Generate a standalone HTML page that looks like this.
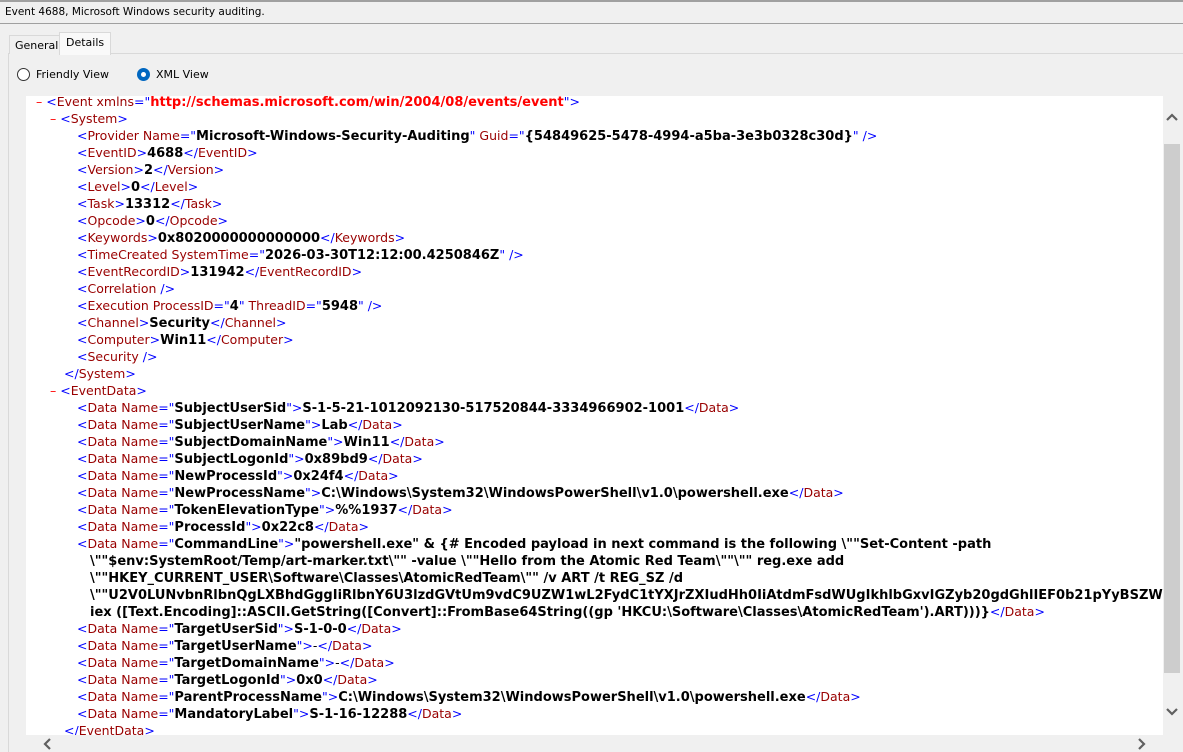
<!DOCTYPE html>
<html><head><meta charset="utf-8"><style>
body{margin:0;width:1183px;height:751px;background:#f0f0f0;position:relative;overflow:hidden;font-family:"Liberation Sans",sans-serif;}
.top{position:absolute;left:0;top:0;width:1183px;height:24px;background:#f0f0f0;border-top:2px solid #a0a0a0;border-bottom:1px solid #a0a0a0;box-sizing:border-box;line-height:20px;padding-left:5px;font-family:"DejaVu Sans",sans-serif;font-size:10.5px;}
.tab{position:absolute;font-family:"DejaVu Sans",sans-serif;font-size:11px;}
.panel{position:absolute;left:8px;top:53px;width:1175px;height:698px;border-left:1px solid #d9d9d9;border-top:1px solid #d9d9d9;background:#f0f0f0;}
.xml{position:absolute;left:26px;top:96px;width:1137px;height:639px;background:#fff;overflow:hidden;font-family:"DejaVu Sans",Verdana,sans-serif;font-size:12.5px;}
.l{position:absolute;white-space:pre;line-height:17px;height:17px;margin-top:-2px}
.b{color:#0000ff}.n{color:#990000}.v{color:#000;font-weight:bold;font-size:13px;line-height:1}.r{color:#ff0000;font-weight:bold;font-size:13px;line-height:1}.m{color:#ff0000}
.vs{position:absolute;left:1163px;top:96px;width:20px;height:639px;background:#f0f0f0}
.thumb{position:absolute;left:1164px;top:144px;width:16px;height:529px;background:#cdcdcd}
.hs{position:absolute;left:26px;top:735px;width:1137px;height:16px;background:#f0f0f0}
</style></head><body>
<div class="top">Event 4688, Microsoft Windows security auditing.</div>
<div class="panel"></div>
<div style="position:absolute;left:9px;top:35px;width:50px;height:18px;border:1px solid #d9d9d9;border-bottom:none;background:#f0f0f0"></div>
<div class="tab" style="left:15px;top:39px">General</div>
<div style="position:absolute;left:59px;top:32px;width:50px;height:22px;border:1px solid #d9d9d9;border-bottom:none;background:#f9f9f9"></div>
<div class="tab" style="left:66px;top:36px">Details</div>
<div style="position:absolute;left:17px;top:68px;width:11px;height:11px;border:1px solid #333;border-radius:50%;background:#fff"></div>
<div class="tab" style="left:36px;top:68px">Friendly View</div>
<div style="position:absolute;left:137px;top:68px;width:13px;height:13px;border-radius:50%;background:#0067c0"></div>
<div style="position:absolute;left:141px;top:72px;width:5px;height:5px;border-radius:50%;background:#fff"></div>
<div class="tab" style="left:156px;top:68px">XML View</div>
<div class="xml">
<div class="l" style="left:10px;top:-1px"><span class="m">–</span> <span class="b">&lt;</span><span class="n">Event xmlns</span><span class="b">="</span><span class="r">http://schemas.microsoft.com/win/2004/08/events/event</span><span class="b">"&gt;</span></div>
<div class="l" style="left:24px;top:16px"><span class="m">–</span> <span class="b">&lt;</span><span class="n">System</span><span class="b">&gt;</span></div>
<div class="l" style="left:51px;top:33px"><span class="b">&lt;</span><span class="n">Provider Name</span><span class="b">="</span><span class="v">Microsoft-Windows-Security-Auditing</span><span class="b">"</span> <span class="n">Guid</span><span class="b">="</span><span class="v">{54849625-5478-4994-a5ba-3e3b0328c30d}</span><span class="b">" /&gt;</span></div>
<div class="l" style="left:51px;top:50px"><span class="b">&lt;</span><span class="n">EventID</span><span class="b">&gt;</span><span class="v">4688</span><span class="b">&lt;/</span><span class="n">EventID</span><span class="b">&gt;</span></div>
<div class="l" style="left:51px;top:67px"><span class="b">&lt;</span><span class="n">Version</span><span class="b">&gt;</span><span class="v">2</span><span class="b">&lt;/</span><span class="n">Version</span><span class="b">&gt;</span></div>
<div class="l" style="left:51px;top:84px"><span class="b">&lt;</span><span class="n">Level</span><span class="b">&gt;</span><span class="v">0</span><span class="b">&lt;/</span><span class="n">Level</span><span class="b">&gt;</span></div>
<div class="l" style="left:51px;top:101px"><span class="b">&lt;</span><span class="n">Task</span><span class="b">&gt;</span><span class="v">13312</span><span class="b">&lt;/</span><span class="n">Task</span><span class="b">&gt;</span></div>
<div class="l" style="left:51px;top:118px"><span class="b">&lt;</span><span class="n">Opcode</span><span class="b">&gt;</span><span class="v">0</span><span class="b">&lt;/</span><span class="n">Opcode</span><span class="b">&gt;</span></div>
<div class="l" style="left:51px;top:135px"><span class="b">&lt;</span><span class="n">Keywords</span><span class="b">&gt;</span><span class="v">0x8020000000000000</span><span class="b">&lt;/</span><span class="n">Keywords</span><span class="b">&gt;</span></div>
<div class="l" style="left:51px;top:152px"><span class="b">&lt;</span><span class="n">TimeCreated SystemTime</span><span class="b">="</span><span class="v">2026-03-30T12:12:00.4250846Z</span><span class="b">" /&gt;</span></div>
<div class="l" style="left:51px;top:169px"><span class="b">&lt;</span><span class="n">EventRecordID</span><span class="b">&gt;</span><span class="v">131942</span><span class="b">&lt;/</span><span class="n">EventRecordID</span><span class="b">&gt;</span></div>
<div class="l" style="left:51px;top:186px"><span class="b">&lt;</span><span class="n">Correlation</span><span class="b"> /&gt;</span></div>
<div class="l" style="left:51px;top:203px"><span class="b">&lt;</span><span class="n">Execution ProcessID</span><span class="b">="</span><span class="v">4</span><span class="b">"</span> <span class="n">ThreadID</span><span class="b">="</span><span class="v">5948</span><span class="b">" /&gt;</span></div>
<div class="l" style="left:51px;top:220px"><span class="b">&lt;</span><span class="n">Channel</span><span class="b">&gt;</span><span class="v">Security</span><span class="b">&lt;/</span><span class="n">Channel</span><span class="b">&gt;</span></div>
<div class="l" style="left:51px;top:237px"><span class="b">&lt;</span><span class="n">Computer</span><span class="b">&gt;</span><span class="v">Win11</span><span class="b">&lt;/</span><span class="n">Computer</span><span class="b">&gt;</span></div>
<div class="l" style="left:51px;top:254px"><span class="b">&lt;</span><span class="n">Security</span><span class="b"> /&gt;</span></div>
<div class="l" style="left:38px;top:271px"><span class="b">&lt;/</span><span class="n">System</span><span class="b">&gt;</span></div>
<div class="l" style="left:24px;top:288px"><span class="m">–</span> <span class="b">&lt;</span><span class="n">EventData</span><span class="b">&gt;</span></div>
<div class="l" style="left:51px;top:305px"><span class="b">&lt;</span><span class="n">Data Name</span><span class="b">="</span><span class="v">SubjectUserSid</span><span class="b">"&gt;</span><span class="v">S-1-5-21-1012092130-517520844-3334966902-1001</span><span class="b">&lt;/</span><span class="n">Data</span><span class="b">&gt;</span></div>
<div class="l" style="left:51px;top:322px"><span class="b">&lt;</span><span class="n">Data Name</span><span class="b">="</span><span class="v">SubjectUserName</span><span class="b">"&gt;</span><span class="v">Lab</span><span class="b">&lt;/</span><span class="n">Data</span><span class="b">&gt;</span></div>
<div class="l" style="left:51px;top:339px"><span class="b">&lt;</span><span class="n">Data Name</span><span class="b">="</span><span class="v">SubjectDomainName</span><span class="b">"&gt;</span><span class="v">Win11</span><span class="b">&lt;/</span><span class="n">Data</span><span class="b">&gt;</span></div>
<div class="l" style="left:51px;top:356px"><span class="b">&lt;</span><span class="n">Data Name</span><span class="b">="</span><span class="v">SubjectLogonId</span><span class="b">"&gt;</span><span class="v">0x89bd9</span><span class="b">&lt;/</span><span class="n">Data</span><span class="b">&gt;</span></div>
<div class="l" style="left:51px;top:373px"><span class="b">&lt;</span><span class="n">Data Name</span><span class="b">="</span><span class="v">NewProcessId</span><span class="b">"&gt;</span><span class="v">0x24f4</span><span class="b">&lt;/</span><span class="n">Data</span><span class="b">&gt;</span></div>
<div class="l" style="left:51px;top:390px"><span class="b">&lt;</span><span class="n">Data Name</span><span class="b">="</span><span class="v">NewProcessName</span><span class="b">"&gt;</span><span class="v">C:\Windows\System32\WindowsPowerShell\v1.0\powershell.exe</span><span class="b">&lt;/</span><span class="n">Data</span><span class="b">&gt;</span></div>
<div class="l" style="left:51px;top:407px"><span class="b">&lt;</span><span class="n">Data Name</span><span class="b">="</span><span class="v">TokenElevationType</span><span class="b">"&gt;</span><span class="v">%%1937</span><span class="b">&lt;/</span><span class="n">Data</span><span class="b">&gt;</span></div>
<div class="l" style="left:51px;top:424px"><span class="b">&lt;</span><span class="n">Data Name</span><span class="b">="</span><span class="v">ProcessId</span><span class="b">"&gt;</span><span class="v">0x22c8</span><span class="b">&lt;/</span><span class="n">Data</span><span class="b">&gt;</span></div>
<div class="l" style="left:51px;top:441px"><span class="b">&lt;</span><span class="n">Data Name</span><span class="b">="</span><span class="v">CommandLine</span><span class="b">"&gt;</span><span class="v">"powershell.exe" &amp; {# Encoded payload in next command is the following \""Set-Content -path</span></div>
<div class="l" style="left:64px;top:458px"><span class="v">\""$env:SystemRoot/Temp/art-marker.txt\"" -value \""Hello from the Atomic Red Team\""\"" reg.exe add</span></div>
<div class="l" style="left:64px;top:475px"><span class="v">\""HKEY_CURRENT_USER\Software\Classes\AtomicRedTeam\"" /v ART /t REG_SZ /d</span></div>
<div class="l" style="left:64px;top:492px"><span class="v">\""U2V0LUNvbnRlbnQgLXBhdGggIiRlbnY6U3lzdGVtUm9vdC9UZW1wL2FydC1tYXJrZXIudHh0IiAtdmFsdWUgIkhlbGxvIGZyb20gdGhlIEF0b21pYyBSZWQgVGVhbSI=</span></div>
<div class="l" style="left:64px;top:509px"><span class="v">iex ([Text.Encoding]::ASCII.GetString([Convert]::FromBase64String((gp 'HKCU:\Software\Classes\AtomicRedTeam').ART)))}</span><span class="b">&lt;/</span><span class="n">Data</span><span class="b">&gt;</span></div>
<div class="l" style="left:51px;top:526px"><span class="b">&lt;</span><span class="n">Data Name</span><span class="b">="</span><span class="v">TargetUserSid</span><span class="b">"&gt;</span><span class="v">S-1-0-0</span><span class="b">&lt;/</span><span class="n">Data</span><span class="b">&gt;</span></div>
<div class="l" style="left:51px;top:543px"><span class="b">&lt;</span><span class="n">Data Name</span><span class="b">="</span><span class="v">TargetUserName</span><span class="b">"&gt;</span>-<span class="b">&lt;/</span><span class="n">Data</span><span class="b">&gt;</span></div>
<div class="l" style="left:51px;top:560px"><span class="b">&lt;</span><span class="n">Data Name</span><span class="b">="</span><span class="v">TargetDomainName</span><span class="b">"&gt;</span>-<span class="b">&lt;/</span><span class="n">Data</span><span class="b">&gt;</span></div>
<div class="l" style="left:51px;top:577px"><span class="b">&lt;</span><span class="n">Data Name</span><span class="b">="</span><span class="v">TargetLogonId</span><span class="b">"&gt;</span><span class="v">0x0</span><span class="b">&lt;/</span><span class="n">Data</span><span class="b">&gt;</span></div>
<div class="l" style="left:51px;top:594px"><span class="b">&lt;</span><span class="n">Data Name</span><span class="b">="</span><span class="v">ParentProcessName</span><span class="b">"&gt;</span><span class="v">C:\Windows\System32\WindowsPowerShell\v1.0\powershell.exe</span><span class="b">&lt;/</span><span class="n">Data</span><span class="b">&gt;</span></div>
<div class="l" style="left:51px;top:611px"><span class="b">&lt;</span><span class="n">Data Name</span><span class="b">="</span><span class="v">MandatoryLabel</span><span class="b">"&gt;</span><span class="v">S-1-16-12288</span><span class="b">&lt;/</span><span class="n">Data</span><span class="b">&gt;</span></div>
<div class="l" style="left:38px;top:628px"><span class="b">&lt;/</span><span class="n">EventData</span><span class="b">&gt;</span></div>
</div>
<div class="vs"></div>
<div class="thumb"></div>
<div class="hs"></div>
<svg style="position:absolute;left:1165px;top:112px" width="14" height="10"><path d="M2 8 L7 3 L12 8" stroke="#606060" stroke-width="2.2" fill="none"/></svg>
<svg style="position:absolute;left:1165px;top:707px" width="14" height="10"><path d="M2 2 L7 7 L12 2" stroke="#606060" stroke-width="2.2" fill="none"/></svg>
<svg style="position:absolute;left:42px;top:737px" width="10" height="14"><path d="M8 2 L3 7 L8 12" stroke="#606060" stroke-width="2.2" fill="none"/></svg>
<svg style="position:absolute;left:1137px;top:737px" width="10" height="14"><path d="M2 2 L7 7 L2 12" stroke="#606060" stroke-width="2.2" fill="none"/></svg>
</body></html>
